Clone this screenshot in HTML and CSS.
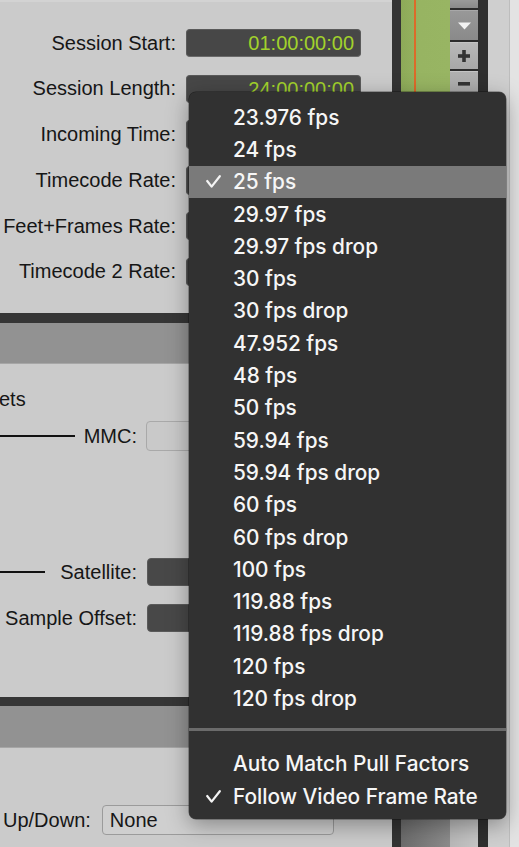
FILE: index.html
```html
<!DOCTYPE html>
<html>
<head>
<meta charset="utf-8">
<link rel="stylesheet" href="styles.css">
</head>
<body>
<div class="screen">
  <div class="panel">
    <div class="session">
      <div class="srow"><span class="slabel">Session Start:</span><span class="tc">01:00:00:00</span></div>
      <div class="srow"><span class="slabel">Session Length:</span><span class="tc">24:00:00:00</span></div>
      <div class="srow"><span class="slabel">Incoming Time:</span><span class="tc"></span></div>
      <div class="srow"><span class="slabel">Timecode Rate:</span><span class="tc"></span></div>
      <div class="srow"><span class="slabel">Feet+Frames Rate:</span><span class="tc"></span></div>
      <div class="srow"><span class="slabel">Timecode 2 Rate:</span><span class="tc"></span></div>
    </div>
    <div class="band"><div class="band-dark"></div><div class="band-grey"></div></div>
    <div class="mid">
      <div class="cut">ets</div>
      <div class="mrow mrow-mmc">
        <div class="mcell"><span class="rule rule-mmc"></span><span>MMC:</span></div>
        <span class="field field-light"></span>
      </div>
      <div class="mrow mrow-sat">
        <div class="mcell"><span class="rule rule-sat"></span><span>Satellite:</span></div>
        <span class="field field-dark"></span>
      </div>
      <div class="mrow mrow-off">
        <div class="mcell"><span>Sample Offset:</span></div>
        <span class="field field-dark"></span>
      </div>
    </div>
    <div class="band band-2"><div class="band-dark"></div><div class="band-grey"></div></div>
    <div class="bottom">
      <div class="brow"><span class="blabel">Up/Down:</span><span class="select">None</span></div>
    </div>
  </div>
  <div class="gutter"></div>
  <div class="track">
    <div class="track-green"><span class="playhead"></span></div>
    <div class="track-grey"></div>
  </div>
  <div class="zoomcol">
    <div class="zseg"></div>
    <div class="zbtn zbtn-down">
      <svg width="13" height="8" viewBox="0 0 13 8"><polygon points="0,0.5 13,0.5 6.5,7.5" fill="#f2f2f2"/></svg>
    </div>
    <div class="zbtn zbtn-plus">
      <svg width="12" height="12" viewBox="0 0 12 12"><rect x="4.2" y="0" width="3.6" height="12" fill="#333"/><rect x="0" y="4.2" width="12" height="3.6" fill="#333"/></svg>
    </div>
    <div class="zbtn zbtn-minus">
      <svg width="12" height="4" viewBox="0 0 12 4"><rect x="0" y="0" width="12" height="3.6" fill="#333"/></svg>
    </div>
    <div class="zrest"></div>
  </div>
  <div class="gutter gutter-2"></div>
  <div class="edge"></div>
  <div class="edge-2"></div>

  <div class="menu">
    <div class="mi"><span class="ck"></span>23.976 fps</div>
    <div class="mi"><span class="ck"></span>24 fps</div>
    <div class="mi mi-on"><span class="ck"><svg width="15" height="13" viewBox="0 0 15 13"><path d="M1.2 6 L5.6 11.6 L13.8 1.2" fill="none" stroke="#f4f4f4" stroke-width="2.2" stroke-linecap="round" stroke-linejoin="round"/></svg></span>25 fps</div>
    <div class="mi"><span class="ck"></span>29.97 fps</div>
    <div class="mi"><span class="ck"></span>29.97 fps drop</div>
    <div class="mi"><span class="ck"></span>30 fps</div>
    <div class="mi"><span class="ck"></span>30 fps drop</div>
    <div class="mi"><span class="ck"></span>47.952 fps</div>
    <div class="mi"><span class="ck"></span>48 fps</div>
    <div class="mi"><span class="ck"></span>50 fps</div>
    <div class="mi"><span class="ck"></span>59.94 fps</div>
    <div class="mi"><span class="ck"></span>59.94 fps drop</div>
    <div class="mi"><span class="ck"></span>60 fps</div>
    <div class="mi"><span class="ck"></span>60 fps drop</div>
    <div class="mi"><span class="ck"></span>100 fps</div>
    <div class="mi"><span class="ck"></span>119.88 fps</div>
    <div class="mi"><span class="ck"></span>119.88 fps drop</div>
    <div class="mi"><span class="ck"></span>120 fps</div>
    <div class="mi"><span class="ck"></span>120 fps drop</div>
    <div class="msep"></div>
    <div class="mi mi-b"><span class="ck"></span>Auto Match Pull Factors</div>
    <div class="mi mi-b"><span class="ck"><svg width="15" height="13" viewBox="0 0 15 13"><path d="M1.2 6 L5.6 11.6 L13.8 1.2" fill="none" stroke="#f4f4f4" stroke-width="2.2" stroke-linecap="round" stroke-linejoin="round"/></svg></span>Follow Video Frame Rate</div>
  </div>
</div>
</body>
</html>
```

FILE: styles.css
```css
html, body {
  margin: 0;
  padding: 0;
  background: #cbcbcb;
  overflow: hidden;
}

.screen {
  position: relative;
  width: 519px;
  height: 847px;
  display: flex;
  overflow: hidden;
  font-family: "Liberation Sans", Arial, sans-serif;
  color: #161616;
}

/* ---------- left panel ---------- */
.panel {
  width: 392px;
  flex: none;
  display: flex;
  flex-direction: column;
  background: #cbcbcb;
}

.session {
  height: 313px;
  box-sizing: border-box;
  padding-top: 29px;
  border-top: 2px solid #d3d3d3;
  display: flex;
  flex-direction: column;
  gap: 17.8px;
}
.session .srow:first-child { margin-top: -2px; }

.srow {
  height: 28px;
  display: flex;
  align-items: center;
  font-size: 20px;
}
.slabel {
  width: 176px;
  text-align: right;
  white-space: nowrap;
}
.tc {
  margin-left: 10px;
  width: 175px;
  height: 28.5px;
  box-sizing: border-box;
  background: #474747;
  border: 1px solid #5a5a5a;
  border-bottom-color: #6a6a6a;
  border-radius: 4px;
  color: #a2d22c;
  font-size: 20px;
  line-height: 26px;
  text-align: right;
  padding-right: 6px;
}

.band {
  display: flex;
  flex-direction: column;
}
.band-dark {
  height: 10px;
  background: #363636;
}
.band-grey {
  height: 40px;
  background: #929292;
  border-bottom: 1px solid #a6a6a6;
}
.band-2 .band-dark { height: 9px; }
.band-2 .band-grey { height: 41px; }

.mid {
  height: 333px;
  box-sizing: border-box;
  padding-top: 24px;
  font-size: 20px;
}
.cut {
  line-height: 23px;
  margin-left: -1px;
}
.mrow {
  display: flex;
  align-items: center;
  gap: 9px;
}
.mrow-mmc { margin-top: 10px; height: 30px; }
.mrow-sat { margin-top: 107px; height: 28px; }
.mrow-off { margin-top: 18px; height: 28px; }
.mcell {
  width: 137px;
  display: flex;
  align-items: center;
  justify-content: flex-end;
  white-space: nowrap;
}
.rule {
  flex: 1;
  height: 1.5px;
  background: #111;
}
.rule-mmc { margin-right: 9px; }
.rule-sat { margin-right: 15px; }

.field {
  width: 120px;
  box-sizing: border-box;
  border-radius: 4px;
}
.field-light {
  height: 30px;
  background: #c9c9c9;
  border: 1px solid #a9a9a9;
}
.field-dark {
  height: 28px;
  margin-left: 1px;
  background: #484848;
  border: 1px solid #5a5a5a;
}

.bottom {
  flex: 1;
  padding-top: 57px;
  font-size: 20px;
}
.brow {
  display: flex;
  align-items: center;
  height: 30px;
  padding-left: 3px;
  gap: 11px;
}
.select {
  width: 232px;
  height: 30px;
  box-sizing: border-box;
  background: #cfcfcf;
  border: 1px solid #9b9b9b;
  border-radius: 4px;
  padding-left: 7px;
  line-height: 28px;
}

/* ---------- right strip ---------- */
.gutter {
  width: 9px;
  flex: none;
  background: #333;
}
.gutter-2 { width: 10px; background: #2f2f2f; }

.track {
  width: 49px;
  flex: none;
  display: flex;
  flex-direction: column;
}
.track-green {
  position: relative;
  height: 790px;
  background: linear-gradient(90deg, #8daa58, #97b462 40%, #98b563);
}
.playhead {
  position: absolute;
  left: 13px;
  top: 0;
  bottom: 0;
  width: 1.5px;
  background: #dc6a2a;
}
.track-grey {
  flex: 1;
  background: linear-gradient(90deg, #6c6c6c, #8c8c8c);
}

.zoomcol {
  width: 28px;
  flex: none;
  display: flex;
  flex-direction: column;
  gap: 2px;
  background: #2c2c2c;
}
.zseg {
  height: 8px;
  background: linear-gradient(#9a9a9a, #8a8a8a);
}
.zbtn {
  display: flex;
  align-items: center;
  justify-content: center;
  border-top: 1px solid #c4c4c4;
  box-sizing: border-box;
}
.zbtn-down {
  height: 30px;
  background: linear-gradient(#989898, #8a8a8a);
  border-top-color: #a8a8a8;
}
.zbtn-plus {
  height: 27px;
  background: linear-gradient(#b8b8b8, #a8a8a8);
}
.zbtn-minus {
  height: 60px;
  background: linear-gradient(#b0b0b0, #a2a2a2);
  align-items: flex-start;
  padding-top: 10px;
}
.zrest {
  flex: 1;
  background: linear-gradient(90deg, #b8b8b8, #c6c6c6);
}

.edge {
  width: 21px;
  flex: none;
  background: #cfcfcf;
  border-right: 1px solid #bdbdbd;
}
.edge-2 {
  flex: 1;
  background: #e3e3e3;
}

/* ---------- popup menu ---------- */
.menu {
  position: absolute;
  left: 189px;
  top: 92px;
  width: 317px;
  box-sizing: border-box;
  padding: 9px 0 6px;
  background: #313131;
  border-radius: 7px;
  box-shadow: 0 6px 22px rgba(0, 0, 0, 0.35), 0 0 0 0.5px rgba(0, 0, 0, 0.5);
  font-family: Inter, "Liberation Sans", sans-serif;
  font-size: 20.8px;
  font-weight: 500;
  color: #f6f6f6;
  display: flex;
  flex-direction: column;
}
.mi {
  height: 32.3px;
  display: flex;
  align-items: center;
  white-space: nowrap;
}
.mi-on {
  background: #7a7a7a;
}
.mi-b {
  height: 33px;
}
.ck {
  width: 44px;
  flex: none;
  box-sizing: border-box;
  padding-left: 17px;
  display: flex;
  align-items: center;
}
.msep {
  height: 3px;
  margin: 13.3px 0 15.8px;
  background: #6b6b6b;
}
```
